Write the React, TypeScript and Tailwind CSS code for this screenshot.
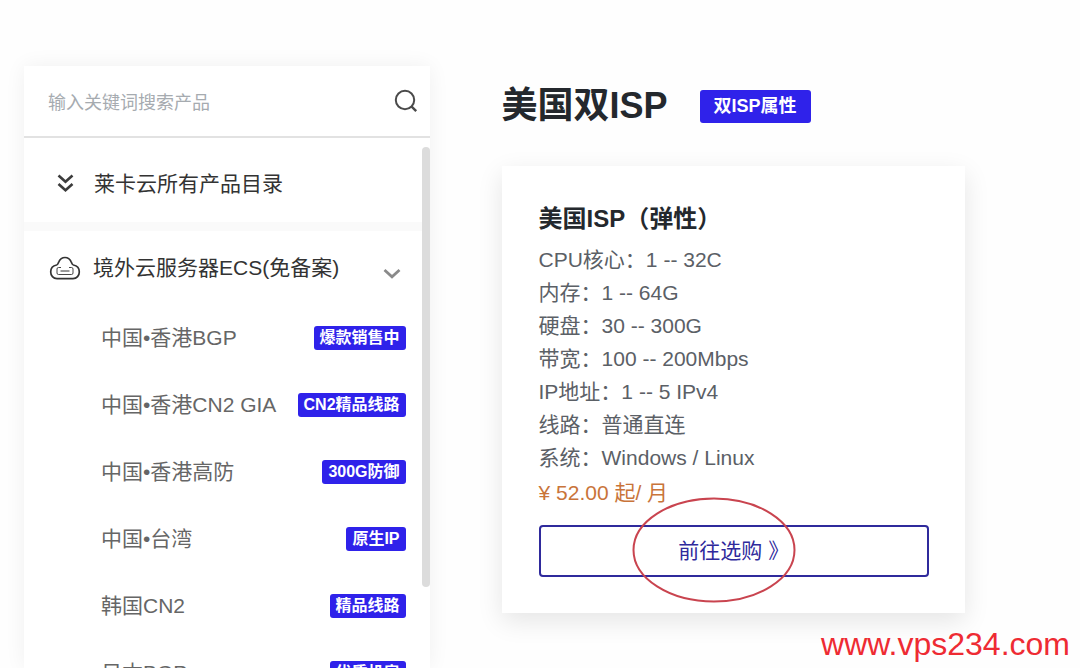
import React from "react";

const products = [
  { name: "中国•香港BGP", tag: "爆款销售中" },
  { name: "中国•香港CN2 GIA", tag: "CN2精品线路" },
  { name: "中国•香港高防", tag: "300G防御" },
  { name: "中国•台湾", tag: "原生IP" },
  { name: "韩国CN2", tag: "精品线路" },
  { name: "日本BGP", tag: "优质机房" },
];

const specs = [
  "CPU核心：1 -- 32C",
  "内存：1 -- 64G",
  "硬盘：30 -- 300G",
  "带宽：100 -- 200Mbps",
  "IP地址：1 -- 5 IPv4",
  "线路：普通直连",
  "系统：Windows / Linux",
];

function SearchIcon() {
  return (
    <svg className="w-6 h-6" viewBox="0 0 24 24" fill="none" stroke="#4a4a4a" strokeWidth="2">
      <circle cx="11" cy="11" r="9.2" />
      <path d="M17.4 17.4 L22.2 22.2" strokeWidth="2.4" />
    </svg>
  );
}

function DoubleChevronIcon() {
  return (
    <svg className="w-8 h-5" viewBox="0 0 32 20" fill="none" stroke="#3c3c3c" strokeWidth="2.6">
      <path d="M8.5 1.5 L15.5 7.8 L22.5 1.5" />
      <path d="M8.5 10 L15.5 16.3 L22.5 10" />
    </svg>
  );
}

function CloudIcon() {
  return (
    <svg className="w-8 h-6" viewBox="0 0 32 24" fill="none" stroke="#333" strokeWidth="1.7">
      <path d="M8 22.6 C4.2 22.6 1.7 19.6 1.7 16 C1.7 12.4 4 9.6 7.6 9 C9.2 8.6 9.2 7 9.8 5.8 C11 3 13.2 1.5 16 1.5 C18.8 1.5 21 3 22.2 5.8 C22.8 7 22.8 8.6 24.4 9 C28 9.6 30.3 12.4 30.3 16 C30.3 19.6 27.8 22.6 24 22.6 Z" />
      <path
        d="M12 11.5 H9.5 Q8 11.5 8 13 V17 Q8 18.5 9.5 18.5 H22.5 Q24 18.5 24 17 V13 Q24 11.5 22.5 11.5 H20"
        strokeWidth="0.9"
      />
      <path d="M11.5 15 H20.5" strokeWidth="1" />
    </svg>
  );
}

function Sidebar() {
  return (
    <aside className="flex flex-col min-h-0 bg-white shadow-[0_0_20px_rgba(0,0,0,0.06)]">
      <form className="flex items-center h-[72px] shrink-0 pl-6 pr-3 border-b-2 border-[#e2e2e2]">
        <input
          type="text"
          aria-label="搜索产品"
          placeholder="输入关键词搜索产品"
          className="flex-1 min-w-0 h-8 pt-1 text-[18px] outline-none placeholder:text-[#a6abb0]"
        />
        <button type="button" aria-label="搜索">
          <SearchIcon />
        </button>
      </form>
      <div className="flex flex-1 min-h-0">
        <nav className="flex-1 min-w-0 overflow-hidden">
          <a
            href="#all"
            className="flex items-center gap-3 h-[93px] pt-2 pl-[26px] border-b-[9px] border-[#fafafa] text-[21px] text-[#333]"
          >
            <DoubleChevronIcon />
            莱卡云所有产品目录
          </a>
          <button
            type="button"
            className="flex items-center gap-3 w-full h-[73px] pl-[25px] pr-5 text-[21px] text-[#333] text-left"
          >
            <CloudIcon />
            <span className="flex-1 whitespace-nowrap">境外云服务器ECS(免备案)</span>
            <svg
              className="w-5 h-3 mt-3"
              viewBox="0 0 20 12"
              fill="none"
              stroke="#8a8a8a"
              strokeWidth="2.8"
            >
              <path d="M2.5 2 L10 8.8 L17.5 2" />
            </svg>
          </button>
          <ul>
            {products.map((product) => (
              <li key={product.name}>
                <a
                  href="#product"
                  className="flex items-center justify-between h-[67px] pl-[77px] pr-4 text-[21px] text-[#666] whitespace-nowrap"
                >
                  {product.name}
                  <span className="h-6 px-[6px] rounded-[3px] bg-[#2f22ea] text-base leading-6 font-bold text-white">
                    {product.tag}
                  </span>
                </a>
              </li>
            ))}
          </ul>
        </nav>
        <div className="w-2 h-[440px] mt-[9px] rounded-full bg-[#dcdcdc]" />
      </div>
    </aside>
  );
}

function PlanCard() {
  return (
    <section className="pt-[33px] pb-9 pl-[37px] pr-9 bg-white shadow-[0_8px_24px_rgba(0,0,0,0.1)]">
      <h2 className="mb-1 text-2xl leading-10 font-bold text-[#24282d]">美国ISP（弹性）</h2>
      <ul className="mb-[2px] text-[21px] leading-[33px] text-[#5b6066]">
        {specs.map((spec) => (
          <li key={spec}>{spec}</li>
        ))}
      </ul>
      <p className="text-[21px] leading-[33px] text-[#c9743a]">¥ 52.00 起/ 月</p>
      <div className="relative mt-4">
        <button
          type="button"
          className="w-full h-[52px] rounded-[4px] border-2 border-[#2f2a9c] text-[21px] text-[#2f2a9c]"
        >
          前往选购 》
        </button>
        <svg
          className="absolute -top-7 left-[93px] w-[164px] h-[106px] pointer-events-none"
          viewBox="0 0 164 106"
          fill="none"
          stroke="#c9444f"
          strokeWidth="2"
        >
          <ellipse cx="82" cy="53" rx="80.5" ry="51.5" />
        </svg>
      </div>
    </section>
  );
}

function App() {
  return (
    <div className="relative h-screen overflow-hidden bg-[#fefefe] font-['Liberation_Sans','Noto_Sans_CJK_SC',sans-serif]">
      <div className="grid grid-cols-[7fr_8fr] grid-rows-1 gap-[72px] h-full pt-[66px] pl-6 pr-[115px]">
        <Sidebar />
        <main className="min-w-0">
          <div className="flex items-center gap-8 h-20 mb-5">
            <h1 className="text-4xl font-bold text-[#24282d] whitespace-nowrap">美国双ISP</h1>
            <span className="px-[14px] rounded-[3px] bg-[#2f22ea] text-lg leading-[33px] font-bold text-white whitespace-nowrap">
              双ISP属性
            </span>
          </div>
          <PlanCard />
        </main>
      </div>
      <p className="absolute right-[10px] bottom-1 text-[32px] leading-10 text-[#ee2b33]">
        www.vps234.com
      </p>
    </div>
  );
}

export default App;
